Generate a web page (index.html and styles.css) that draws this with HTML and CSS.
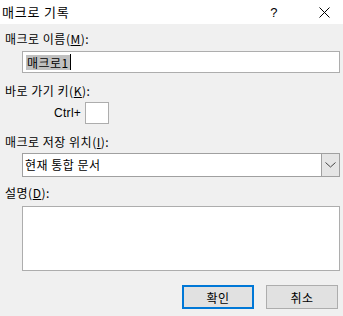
FILE: index.html
```html
<!DOCTYPE html>
<html>
<head>
    <title>매크로 기록</title>
    <link rel="stylesheet" href="styles.css">
</head>
<body>
  <div class="titlebar">
      <span class="title">매크로 기록</span>
      <span class="help">?</span>
      <svg class="close" width="11" height="11" viewBox="0 0 11 11">
          <path d="M0.5 0.5 L10.5 10.5 M10.5 0.5 L0.5 10.5" stroke="#000" stroke-width="1"/>
      </svg>
  </div>
  <div class="dialog">
      <div class="label first">매크로 이름(<u>M</u>):</div>
      <div class="field name-field">
          <span class="selected">매크로1</span><span class="caret"></span>
      </div>

      <div class="label">바로 가기 키(<u>K</u>):</div>
      <div class="shortcut">
          <span class="ctrl">Ctrl+</span>
          <div class="keybox"></div>
      </div>

      <div class="label">매크로 저장 위치(<u>I</u>):</div>
      <div class="select">
          <span class="select-text">현재 통합 문서</span>
          <span class="select-btn">
              <svg width="11" height="6" viewBox="0 0 11 6">
                  <path d="M0.5 0.5 L5.5 5 L10.5 0.5" fill="none" stroke="#444" stroke-width="1"/>
              </svg>
          </span>
      </div>

      <div class="label desc">설명(<u>D</u>):</div>
      <div class="field memo"></div>

      <div class="buttons">
          <button class="btn default">확인</button>
          <button class="btn">취소</button>
      </div>
  </div>
</body>
</html>
```

FILE: styles.css
```css
body{
    margin: 0px;
    padding: 0px;
    width: 343px;
    height: 316px;
    background: #f0f0f0;
    font-family: "Noto Sans CJK KR", "Liberation Sans", sans-serif;
    font-size: 12px;
    letter-spacing: 0.5px;
    color: #000;
    overflow: hidden;
}

.titlebar{
    height: 24px;
    background: #fff;
    display: flex;
    align-items: center;
}

.title{
    padding-left: 2px;
    font-size: 13px;
    letter-spacing: 0.8px;
    flex: 1;
    margin-top: -2px;
}

.help{
    font-family: "Liberation Sans", sans-serif;
    font-size: 13px;
    margin-right: 41px;
}

.close{
    margin-right: 13px;
}

.dialog{
    padding: 0 5px 0 5px;
}

.label{
    height: 16px;
    line-height: 16px;
    margin-top: 10px;
}

.label.first{
    margin-top: 7px;
}

.label.desc{
    margin-top: 8px;
}

u{
    text-underline-offset: 1px;
}

.field{
    margin-left: 17px;
    margin-top: 4px;
    width: 316px;
    background: #fff;
    border: 1px solid #adadad;
}

.name-field{
    height: 20px;
    display: flex;
    align-items: center;
    padding-left: 3px;
    width: 313px;
}

.selected{
    background: #c0c0c0;
    line-height: 15px;
    padding: 0 1px;
}

.caret{
    width: 1px;
    height: 16px;
    background: #000;
}

.shortcut{
    display: flex;
    align-items: center;
    margin-top: 3px;
    padding-left: 49px;
}

.ctrl{
    font-family: "Liberation Sans", sans-serif;
    font-size: 12px;
    letter-spacing: 0.3px;
    width: 31px;
}

.keybox{
    width: 22px;
    height: 20px;
    background: #fff;
    border: 1px solid #adadad;
}

.select{
    margin-left: 17px;
    margin-top: 3px;
    width: 316px;
    height: 22px;
    background: #fff;
    border: 1px solid #a0a0a0;
    display: flex;
}

.select-text{
    flex: 1;
    padding-left: 2px;
    line-height: 22px;
}

.select-btn{
    width: 17px;
    background: #e5e5e5;
    border-left: 1px solid #a0a0a0;
    display: flex;
    align-items: center;
    justify-content: center;
}

.memo{
    height: 63px;
    margin-top: 5px;
}

.buttons{
    display: flex;
    justify-content: flex-end;
    gap: 12px;
    margin-top: 14px;
}

.btn{
    width: 72px;
    height: 24px;
    background: #e1e1e1;
    border: 1px solid #adadad;
    font-family: "Noto Sans CJK KR", sans-serif;
    font-size: 12px;
    letter-spacing: 0.5px;
    padding: 0;
    margin: 0;
}

.btn.default{
    border: 2px solid #0078d7;
}
```
